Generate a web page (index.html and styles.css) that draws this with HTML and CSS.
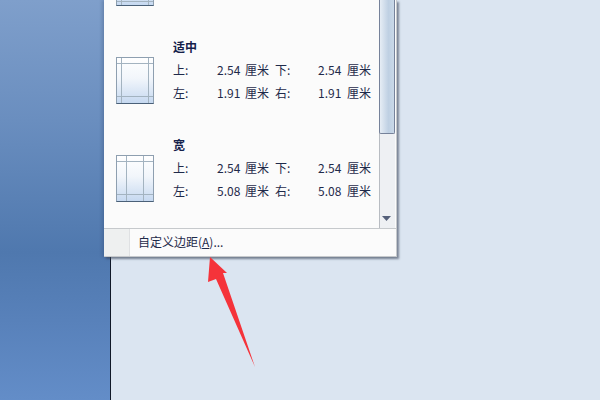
FILE: index.html
```html
<!DOCTYPE html>
<html lang="zh-CN">
<head>
<meta charset="utf-8">
<title>自定义边距</title>
<link rel="stylesheet" href="styles.css">
</head>
<body>
<div class="screen">
  <div class="sidebar"></div>
  <div class="page"></div>
  <div class="menu">
    <div class="menu-body">
      <div class="list">
        <div class="clipped">
          <svg class="thumb" width="38" height="47" viewBox="0 0 38 47"><defs><linearGradient id="g0" x1="0" y1="0" x2="0" y2="1"><stop offset="0" stop-color="#fff"/><stop offset=".45" stop-color="#f2f6fb"/><stop offset="1" stop-color="#c5d8f0"/></linearGradient></defs><rect x=".5" y=".5" width="37" height="46" fill="url(#g0)" stroke="#8e9fb0"/><path d="M1 42.500H37M5.500 1V46M32.500 1V46" stroke="#a3b3c0"/><path d="M.5 46.500H37.500" stroke="#4a6078"/></svg>
        </div>
        <div class="item">
          <svg class="thumb" width="38" height="47" viewBox="0 0 38 47"><defs><linearGradient id="g1" x1="0" y1="0" x2="0" y2="1"><stop offset="0" stop-color="#fff"/><stop offset=".45" stop-color="#f2f6fb"/><stop offset="1" stop-color="#c5d8f0"/></linearGradient></defs><rect x=".5" y=".5" width="37" height="46" fill="url(#g1)" stroke="#8e9fb0"/><path d="M1 6.500H37M1 39.500H37M5.500 1V46M32.500 1V46" stroke="#a3b3c0"/><path d="M.5 46.500H37.500" stroke="#4a6078"/></svg>
          <div class="info">
            <div class="name">适中</div>
            <div class="vals"><span>上:</span><span>2.54</span><span>厘米</span><span>下:</span><span>2.54</span><span>厘米</span></div>
            <div class="vals"><span>左:</span><span>1.91</span><span>厘米</span><span>右:</span><span>1.91</span><span>厘米</span></div>
          </div>
        </div>
        <div class="item">
          <svg class="thumb" width="38" height="47" viewBox="0 0 38 47"><defs><linearGradient id="g2" x1="0" y1="0" x2="0" y2="1"><stop offset="0" stop-color="#fff"/><stop offset=".45" stop-color="#f2f6fb"/><stop offset="1" stop-color="#c5d8f0"/></linearGradient></defs><rect x=".5" y=".5" width="37" height="46" fill="url(#g2)" stroke="#8e9fb0"/><path d="M1 6.500H37M1 39.500H37M10.500 1V46M27.500 1V46" stroke="#a3b3c0"/><path d="M.5 46.500H37.500" stroke="#4a6078"/></svg>
          <div class="info">
            <div class="name">宽</div>
            <div class="vals"><span>上:</span><span>2.54</span><span>厘米</span><span>下:</span><span>2.54</span><span>厘米</span></div>
            <div class="vals"><span>左:</span><span>5.08</span><span>厘米</span><span>右:</span><span>5.08</span><span>厘米</span></div>
          </div>
        </div>
      </div>
      <div class="scrollbar">
        <div class="scroll-thumb"></div>
        <div class="scroll-track"></div>
        <svg class="scroll-arrow" width="9" height="5" viewBox="0 0 9 5"><path d="M0 0H9L4.500 5Z" fill="#55607a"/></svg>
      </div>
    </div>
    <div class="menu-foot">
      <div class="foot-gutter"></div>
      <div class="foot-label">自定义边距(<u>A</u>)...</div>
    </div>
  </div>
  <svg class="arrow" width="50" height="112" viewBox="0 0 50 112"><path d="M2 0L19 16L15 16L47 110L8 22L0 25Z" fill="#f5333a"/></svg>
</div>
</body>
</html>
```
FILE: styles.css
```css
html, body {
  margin: 0;
  padding: 0;
}
.screen {
  position: relative;
  display: flex;
  width: 600px;
  height: 400px;
  overflow: hidden;
  font-family: "Noto Sans CJK SC", "Liberation Sans", sans-serif;
  font-size: 12px;
  color: #1f2a4a;
}
.sidebar {
  width: 110px;
  background: linear-gradient(to bottom, #7f9fcb 0%, #6a8ebf 30%, #4f78ae 63%, #5881ba 80%, #638dc8 100%);
  border-right: 1px solid #101828;
}
.page {
  flex: 1;
  background: #dbe5f1;
}
.menu {
  position: absolute;
  left: 104px;
  top: 0;
  width: 292px;
  height: 256px;
  display: flex;
  flex-direction: column;
  background: #fbfbfb;
  border-right: 1px solid #c6c9cc;
  border-bottom: 1px solid #c6c9cc;
  box-shadow: 2px 2px 2px rgba(60, 70, 90, .6), -2px 0 3px rgba(40, 60, 90, .25);
}
.menu-body {
  flex: 1;
  display: flex;
  min-height: 0;
}
.list {
  flex: 1;
  padding-left: 12px;
  overflow: hidden;
}
.clipped {
  height: 6px;
  margin-bottom: 14px;
  overflow: hidden;
  display: flex;
  flex-direction: column;
  justify-content: flex-end;
}
.thumb {
  display: block;
  flex: none;
}
.item {
  display: flex;
  align-items: flex-start;
  height: 98px;
}
.item .thumb {
  margin-top: 37px;
}
.info {
  margin-left: 19px;
  margin-top: 15px;
}
.name {
  height: 23px;
  line-height: 23px;
  font-weight: 700;
  color: #14204a;
}
.vals {
  display: grid;
  grid-template-columns: 44px 28px 30px 43px 29px 28px;
  height: 23px;
  line-height: 23px;
  white-space: nowrap;
}
.scrollbar {
  width: 15px;
  margin-right: 1px;
  display: flex;
  flex-direction: column;
  border-left: 1px solid #b8bcc2;
  background: #eef0f3;
}
.scroll-thumb {
  box-sizing: border-box;
  height: 134px;
  margin-left: -1px;
  width: 16px;
  background: linear-gradient(to right, #e6edf5, #bfd0e3 60%, #c9d8e8);
  border: 1px solid #76829a;
  border-top: 0;
  border-radius: 0 0 2px 2px;
}
.scroll-track {
  flex: 1;
}
.scroll-arrow {
  align-self: center;
  margin: 0 2px 7px 0;
}
.menu-foot {
  flex: none;
  height: 27px;
  display: flex;
  border-top: 1px solid #c6c9cc;
}
.foot-gutter {
  width: 25px;
  background: #eef0f0;
  border-right: 1px solid #dfe1e3;
}
.foot-label {
  padding-left: 8px;
  line-height: 26px;
  color: #1f2a4a;
}
.arrow {
  position: absolute;
  left: 208px;
  top: 257px;
}
```
